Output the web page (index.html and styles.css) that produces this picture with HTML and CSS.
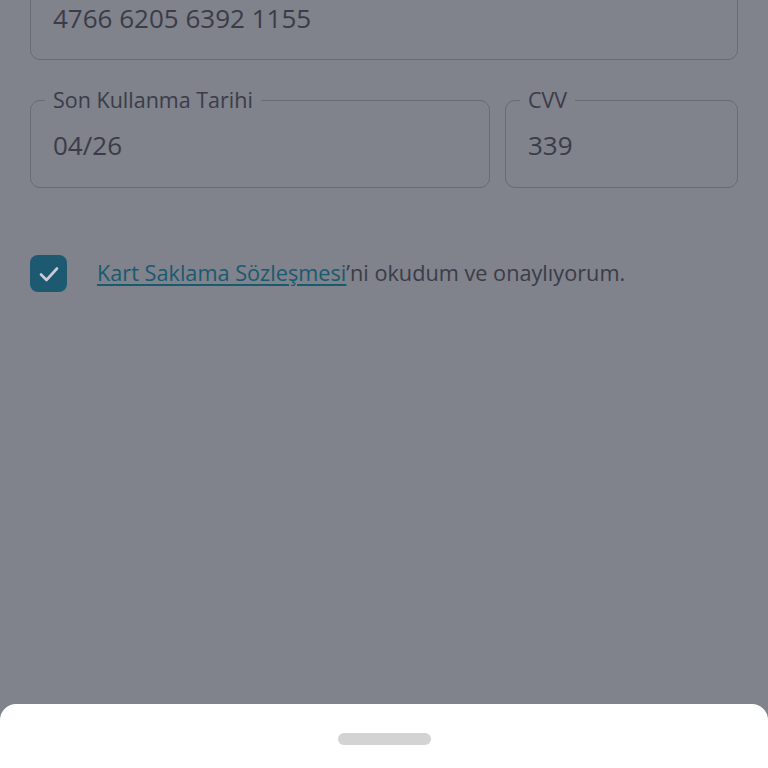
FILE: index.html
```html
<!DOCTYPE html>
<html lang="tr">
<head>
  <meta charset="UTF-8">
  <meta name="viewport" content="width=device-width, initial-scale=1.0">
  <title>Kart Bilgileri</title>
  <link rel="stylesheet" href="styles.css">
</head>
<body>
  <div class="container">
    <fieldset class="field field-top">
      <div class="value">4766 6205 6392 1155</div>
    </fieldset>
    <div class="row">
      <fieldset class="field field-date">
        <legend>Son Kullanma Tarihi</legend>
        <div class="value">04/26</div>
      </fieldset>
      <fieldset class="field field-cvv">
        <legend>CVV</legend>
        <div class="value">339</div>
      </fieldset>
    </div>
    <div class="agree">
      <span class="checkbox">
        <svg width="22" height="22" viewBox="0 0 22 22"><path d="M3 11.5 L8.5 17 L19 5.5" fill="none" stroke="#c9cdd3" stroke-width="2.6" stroke-linecap="round" stroke-linejoin="round"/></svg>
      </span>
      <p><a href="#">Kart Saklama Sözleşmesi</a>’ni okudum ve onaylıyorum.</p>
    </div>
  </div>
  <div class="sheet">
    <div class="handle"></div>
  </div>
</body>
</html>
```

FILE: styles.css
```css
body {
  margin: 0;
  background-color: #80828c;
  font-family: "Open Sans", sans-serif;
  color: #3a3c48;
  height: 768px;
  overflow: hidden;
}
.container {
  padding: 0 30px;
}
.field {
  margin: 0;
  border: 1.5px solid #686a75;
  border-radius: 10px;
  padding: 0 22px;
  min-width: 0;
  box-sizing: border-box;
}
.field legend {
  font-size: 21.5px;
  line-height: 26px;
  padding: 0 8px;
  margin-left: -8px;
}
.field-top {
  margin-top: -28px;
  height: 88px;
  padding-top: 28px;
}
.value {
  font-size: 26px;
  line-height: 34px;
}
.row {
  display: flex;
  gap: 15px;
  margin-top: 27px;
}
.field-date {
  flex: 0 0 460px;
  height: 101px;
}
.field-date .value,
.field-cvv .value {
  margin-top: 15px;
}
.field-cvv {
  flex: 1;
  height: 101px;
}
.agree {
  display: flex;
  align-items: center;
  gap: 30px;
  margin-top: 67px;
}
.checkbox {
  width: 37px;
  height: 37px;
  border-radius: 8px;
  background-color: #1d5a72;
  display: flex;
  align-items: center;
  justify-content: center;
  flex-shrink: 0;
}
.agree p {
  margin: 0 0 3px;
  font-size: 21.7px;
}
.agree a {
  color: #1a5a6f;
  text-decoration: underline;
  text-underline-offset: 3px;
}
.sheet {
  position: fixed;
  left: 0;
  right: 0;
  bottom: 0;
  height: 64px;
  background: #fff;
  border-radius: 16px 16px 0 0;
  display: flex;
  justify-content: center;
}
.handle {
  width: 93px;
  height: 12px;
  border-radius: 6px;
  background-color: #d3d3d3;
  margin-top: 29px;
}
```
